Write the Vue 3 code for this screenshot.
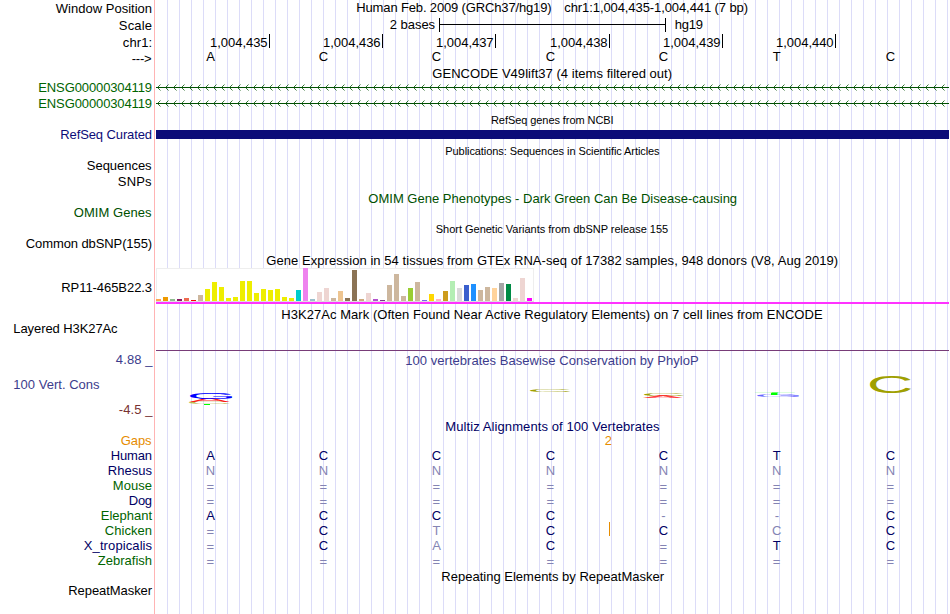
<script setup>
const W = 794
const LEFT = 155

// Each text run is [text, ink start x, ink end x, baseline inside its row].
const place = ([text, x0, x1, y], color = '#000', size = 13) => ({
  text, y, color, size, x: x0 - 0.7, len: x1 - x0 + 0.8
})

const black = '#000'
const navy = '#000064'
const green = '#006400'
const slate = '#3c3c8c'
const maroon = '#783232'
const orange = '#e68c00'

const row = (h, labels, titles, extra = {}) => ({ h, labels, titles, ...extra })
const centers = [210.5, 323.5, 436.5, 550.5, 663.5, 776.8, 890.5]

const species = [
  ['Human', 111.5, navy, 'ACCCCTC', 'ddddddd'],
  ['Rhesus', 108.5, navy, 'NNNNNNN', 'lllllll'],
  ['Mouse', 113.5, green, '=======', 'lllllll'],
  ['Dog', 129.5, navy, '=======', 'lllllll'],
  ['Elephant', 101.5, green, 'ACCC--C', 'ddddlld'],
  ['Chicken', 105.5, green, '=CTCCCC', 'ldlddld'],
  ['X_tropicalis', 84.5, navy, '=CAC=TC', 'ldldldd'],
  ['Zebrafish', 98.5, green, '=======', 'lllllll']
]

const rows = [
  row(17, [place(['Window Position', 56.5, 152, 13])],
    [place(['Human Feb. 2009 (GRCh37/hg19)', 357, 551.5, 12]), place(['chr1:1,004,435-1,004,441 (7 bp)', 565, 748, 12])]),
  row(17, [place(['Scale', 119.5, 152, 13])],
    [place(['2 bases', 390.5, 435, 12]), place(['hg19', 675.5, 703, 12])], { kind: 'scale' }),
  row(16, [place(['chr1:', 123.5, 152, 13])], [], { kind: 'ticks' }),
  row(16, [place(['--->', 132.5, 151.5, 13])], [], { kind: 'bases', letters: 'ACCCCTC', shades: 'bbbbbbb', base: 11 }),
  row(15, [], [place(['GENCODE V49lift37 (4 items filtered out)', 433, 672, 12])]),
  row(16, [place(['ENSG00000304119', 39, 152, 11], green)], [], { kind: 'gene' }),
  row(16, [place(['ENSG00000304119', 39, 152, 11], green)], [], { kind: 'gene' }),
  row(15, [], [place(['RefSeq genes from NCBI', 491.7, 613.5, 11], black, 11)]),
  row(16, [place(['RefSeq Curated', 61, 152, 11], '#0c0c78')], [], { kind: 'bar' }),
  row(15, [], [place(['Publications: Sequences in Scientific Articles', 446, 659.5, 11], black, 11)]),
  row(16, [place(['Sequences', 87.5, 151.5, 11])], []),
  row(16, [place(['SNPs', 118.5, 151.5, 11])], []),
  row(15, [], [place(['OMIM Gene Phenotypes - Dark Green Can Be Disease-causing', 369, 737, 12], '#005000')]),
  row(16, [place(['OMIM Genes', 74.5, 151.5, 11], '#005000')], []),
  row(15, [], [place(['Short Genetic Variants from dbSNP release 155', 436.5, 668, 11], black, 11)]),
  row(16, [place(['Common dbSNP(155)', 26.5, 152, 11])], []),
  row(15, [], [place(['Gene Expression in 54 tissues from GTEx RNA-seq of 17382 samples, 948 donors (V8, Aug 2019)', 267, 838, 12])]),
  row(39, [place(['RP11-465B22.3', 62, 152, 24])], [], { kind: 'gtex' }),
  row(15, [], [place(['H3K27Ac Mark (Often Found Near Active Regulatory Elements) on 7 cell lines from ENCODE', 282, 822.5, 12])]),
  row(31, [place(['Layered H3K27Ac', 14, 117.5, 11])], [], { kind: 'signal' }),
  row(15, [place(['4.88 _', 116.5, 152.5, 11], slate)],
    [place(['100 vertebrates Basewise Conservation by PhyloP', 406, 698.5, 12], slate)]),
  row(51, [place(['100 Vert. Cons', 14, 99.5, 21], slate), place(['-4.5 _', 119.5, 152.5, 46], maroon)], [], { kind: 'logo' }),
  row(15, [], [place(['Multiz Alignments of 100 Vertebrates', 446, 659.5, 12], navy)]),
  row(15, [place(['Gaps', 121.5, 151.5, 11], orange)], [place(['2', 605.5, 612, 11], orange)]),
  ...species.map(([name, x, color, letters, shades]) =>
    row(15, [place([name, x, 152, 11], color)], [], { kind: 'bases', letters, shades, base: 11, insert: name === 'Chicken' })),
  row(15, [], [place(['Repeating Elements by RepeatMasker', 442, 664, 12])]),
  row(30, [place(['RepeatMasker', 69, 152, 11])], [])
]

const shadeColor = { b: '#000', d: navy, l: '#8484b4' }
const ticks = [269, 382, 495, 609, 722, 835].map((x, i) => ({ x, text: `1,004,${435 + i}` }))
const arrows = Array.from({ length: 99 }, (_, i) => `M${160.5 + i * 8} 3.5l-3 3l3 3`).join('')

const gtex = [
  [2, '#ffa54f'], [4, '#ee9a00'], [2, '#8fbc8f'], [2, '#8b1c62'], [3, '#ee6a50'], [1, '#ff0000'], [6, '#cdb79e'],
  [12, '#eeee00'], [19, '#eeee00'], [14, '#eeee00'], [3, '#eeee00'], [4, '#eeee00'], [20, '#eeee00'], [20, '#eeee00'],
  [8, '#eeee00'], [12, '#eeee00'], [11, '#eeee00'], [12, '#eeee00'], [4, '#eeee00'], [3, '#eeee00'], [11, '#00cdcd'],
  [33, '#ee82ee'], [2, '#9ac0cd'], [9, '#eed5d2'], [13, '#eed5d2'], [3, '#cdb79e'], [10, '#eec591'], [3, '#8b7355'],
  [31, '#8b7355'], [2, '#cdaa7d'], [8, '#eed5d2'], [2, '#b452cd'], [1, '#7a378b'], [16, '#cdb79e'], [27, '#cdb79e'],
  [5, '#cdb79e'], [13, '#9acd32'], [19, '#cdb79e'], [1, '#7a67ee'], [7, '#ffd700'], [2, '#ffb6c1'], [10, '#cd9b1d'],
  [20, '#b4eeb4'], [13, '#d9d9d9'], [16, '#3a5fcd'], [17, '#1e90ff'], [11, '#cdb79e'], [14, '#cdb79e'], [13, '#ffd39b'],
  [18, '#a6a6a6'], [17, '#008b45'], [3, '#eed5d2'], [23, '#eed5d2'], [3, '#ff00ff']
]

// Sequence-logo letters are stretched to the box x, y, w, h.
const ink = { A: [0.3, 66.4, 69, 0], C: [5, 68.5, 70, 1], G: [5, 72, 70, 1], T: [2, 59, 69, 0] }
const logo = [
  ['C', 189, 401.5, 41, 2.5, '#a0a000', 0.7], ['A', 189, 399, 41, 3.2, '#ff0000', 0.9], ['G', 190, 393, 43, 6.4, '#0000ff', 1],
  ['C', 530, 389, 40.5, 3, '#a0a000', 1],
  ['C', 644, 393, 40, 3, '#a0a000', 1], ['A', 643, 395.8, 40, 2, '#ff0000', 0.75],
  ['T', 755, 393, 40, 2, '#00ff00', 0.6], ['G', 757, 395, 43, 2.2, '#0000ff', 0.6],
  ['C', 870, 376, 41, 17, '#a0a000', 1]
].map(([ch, x, y, w, h, color, opacity]) => {
  const [a, b, up, down] = ink[ch]
  const sx = w / (b - a)
  const sy = h / (up + down)
  return { ch, color, opacity, transform: `matrix(${sx} 0 0 ${sy} ${x - a * sx} ${y - 368 + up * sy})` }
})
</script>

<template>
  <main class="browser">
    <section v-for="(r, i) in rows" :key="i" class="track">
      <svg class="side" :width="LEFT" :height="r.h" :viewBox="`0 0 ${LEFT} ${r.h}`">
        <text v-for="t in r.labels" :key="t.text" :x="t.x" :y="t.y" :fill="t.color" :font-size="t.size" :textLength="t.len">{{ t.text }}</text>
      </svg>
      <svg class="plot" :width="W" :height="r.h" :viewBox="`${LEFT} 0 ${W} ${r.h}`">
        <g v-if="r.kind === 'scale'" class="crisp">
          <rect x="439" y="7" width="227" height="1" />
          <rect x="439" y="1" width="1" height="14" />
          <rect x="665" y="1" width="1" height="14" />
        </g>
        <g v-else-if="r.kind === 'ticks'">
          <template v-for="t in ticks" :key="t.x">
            <text :x="t.x - 59" y="13" font-size="13" textLength="57.6">{{ t.text }}</text>
            <rect class="crisp" :x="t.x" y="0" width="1" height="14" />
          </template>
        </g>
        <g v-else-if="r.kind === 'bases'">
          <text
            v-for="(ch, n) in r.letters" :key="n" class="base" :x="centers[n] - (ch === '=' ? 0.2 : 0)"
            :y="r.base + (ch === '=' ? 1 : 0)" :fill="shadeColor[r.shades[n]]"
          >{{ ch }}</text>
          <rect v-if="r.insert" class="crisp" x="609" y="-2" width="1" height="14" :fill="orange" />
        </g>
        <g v-else-if="r.kind === 'gene'">
          <rect class="crisp" x="156" y="6" width="793" height="1" fill="#005000" />
          <path :d="arrows" class="arrows" />
        </g>
        <rect v-else-if="r.kind === 'bar'" class="crisp" x="156" y="2" width="793" height="9" fill="#0c0c78" />
        <g v-else-if="r.kind === 'gtex'" class="crisp">
          <rect x="156" y="0" width="378" height="34" fill="#eee" />
          <rect x="157" y="1" width="376" height="32" fill="#fff" />
          <rect x="156" y="33" width="378" height="1" fill="#ddd" />
          <rect v-for="([h, c], n) in gtex" :key="n" :x="156 + n * 7" :y="33 - h" width="5" :height="h" :fill="c" />
          <rect x="156" y="34" width="793" height="2" fill="#ff33ff" />
        </g>
        <rect v-else-if="r.kind === 'signal'" class="crisp" x="156" y="28" width="793" height="1" fill="#783c78" />
        <g v-else-if="r.kind === 'logo'">
          <text v-for="(l, n) in logo" :key="n" font-size="100" :fill="l.color" :fill-opacity="l.opacity" :transform="l.transform">{{ l.ch }}</text>
          <rect class="crisp" x="204" y="36" width="6" height="1" fill="#00ff00" />
          <rect class="crisp" x="771" y="25" width="6" height="2" fill="#00ff00" />
        </g>
        <text v-for="t in r.titles" :key="t.text" :x="t.x" :y="t.y" :fill="t.color" :font-size="t.size" :textLength="t.len">{{ t.text }}</text>
      </svg>
    </section>
  </main>
</template>

<style>
body {
  margin: 0;
  background: #fff;
}
</style>

<style scoped>
.browser {
  display: flex;
  flex-direction: column;
  width: 949px;
  height: 614px;
  overflow: hidden;
  font-family: "Liberation Sans", Arial, sans-serif;
  background:
    linear-gradient(#ffb4b4, #ffb4b4) 154px 0 / 1px 100% no-repeat,
    repeating-linear-gradient(to right, transparent 0 11px, #dcdcf8 11px 12px) 156px 0 / 793px 100% no-repeat,
    #fff;
}

.track {
  display: flex;
  flex: none;
}

svg {
  display: block;
  flex: none;
  overflow: visible;
}

text {
  white-space: pre;
}

.base {
  font-size: 13px;
  text-anchor: middle;
}

.crisp {
  shape-rendering: crispEdges;
}

.arrows {
  fill: none;
  stroke: #005000;
  stroke-width: 0.8;
}
</style>
